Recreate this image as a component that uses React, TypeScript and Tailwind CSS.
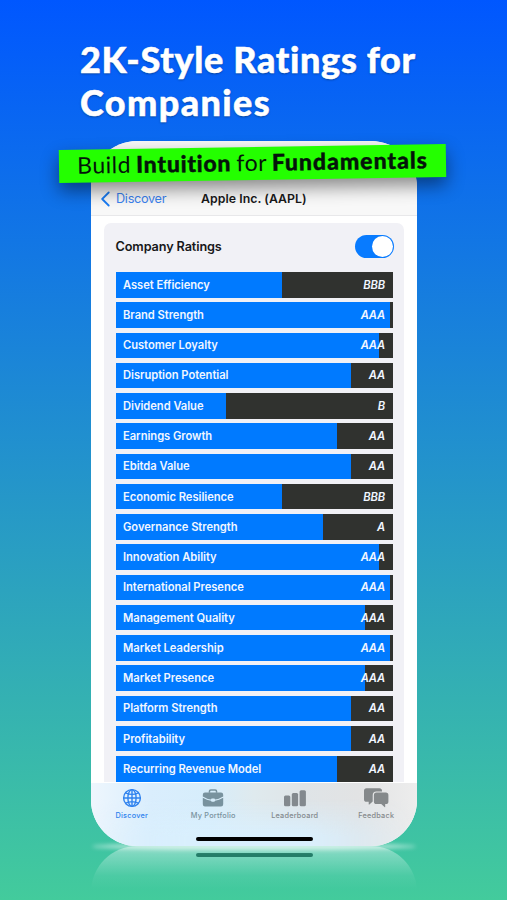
const ratings = [
  { name: 'Asset Efficiency', score: 60, grade: 'BBB' },
  { name: 'Brand Strength', score: 99, grade: 'AAA' },
  { name: 'Customer Loyalty', score: 95, grade: 'AAA' },
  { name: 'Disruption Potential', score: 85, grade: 'AA' },
  { name: 'Dividend Value', score: 40, grade: 'B' },
  { name: 'Earnings Growth', score: 80, grade: 'AA' },
  { name: 'Ebitda Value', score: 85, grade: 'AA' },
  { name: 'Economic Resilience', score: 60, grade: 'BBB' },
  { name: 'Governance Strength', score: 75, grade: 'A' },
  { name: 'Innovation Ability', score: 95, grade: 'AAA' },
  { name: 'International Presence', score: 99, grade: 'AAA' },
  { name: 'Management Quality', score: 90, grade: 'AAA' },
  { name: 'Market Leadership', score: 99, grade: 'AAA' },
  { name: 'Market Presence', score: 90, grade: 'AAA' },
  { name: 'Platform Strength', score: 85, grade: 'AA' },
  { name: 'Profitability', score: 85, grade: 'AA' },
  { name: 'Recurring Revenue Model', score: 80, grade: 'AA' },
];

function Globe() {
  return (
    <svg width="20" height="20" viewBox="0 0 20 20" fill="none" stroke="currentColor" strokeWidth="1.4">
      <circle cx="10" cy="10" r="8.4" />
      <ellipse cx="10" cy="10" rx="4.1" ry="8.4" />
      <path d="M10 1.6v16.8M1.6 10h16.8M3.6 4.8Q10 8 16.4 4.8M3.6 15.2Q10 12 16.4 15.2" />
    </svg>
  );
}

function Briefcase() {
  return (
    <svg width="22" height="20" viewBox="0 0 22 20" fill="currentColor">
      <path d="M6.7 4.8V3.3Q6.7 1.2 8.8 1.2h4.4q2.1 0 2.1 2.1v1.5h-1.5V3.5q0-.8-.8-.8H9q-.8 0-.8.8v1.3z" />
      <path d="M3 4.5h16q2.2 0 2.2 2.2v1.7Q17 11 13 11.5q0-1-1-1h-2q-1 0-1 1Q5 11 .8 8.4V6.7Q.8 4.5 3 4.5z" />
      <path d="M.8 9.8Q5 12.3 9 12.7q.2 1 1 1h2q.8 0 1-1 4-.4 8.2-2.9v6.4q0 2.2-2.2 2.2H3Q.8 18.4.8 16.2z" />
    </svg>
  );
}

function Bars() {
  return (
    <svg width="24" height="20" viewBox="0 0 24 20" fill="currentColor">
      <rect x="1" y="7.5" width="6.3" height="10.8" rx="1.5" />
      <rect x="8.8" y="5" width="6.3" height="13.3" rx="1.5" />
      <rect x="16.6" y="2.2" width="6.3" height="16.1" rx="1.5" />
    </svg>
  );
}

function Chats() {
  return (
    <svg width="26" height="22" viewBox="0 0 26 22" fill="currentColor">
      <path d="M3.6 1.2h12.8q2.6 0 2.6 2.6v.7h-5.6q-3.7 0-3.7 3.7v6.2L6.4 17.4q-.7.5-.7-.4v-2.2H3.6Q1 14.8 1 12.2V3.8q0-2.6 2.6-2.6z" />
      <path d="M13.5 5.6h9.3q2.6 0 2.6 2.6v6.2q0 2.6-2.6 2.6h-.6v2.7q0 .9-.7.3L18.2 17h-4.7q-2.6 0-2.6-2.6V8.2q0-2.6 2.6-2.6z" />
    </svg>
  );
}

const tabs = [
  { label: 'Discover', icon: <Globe />, color: 'text-[#2f82ee]' },
  { label: 'My Portfolio', icon: <Briefcase />, color: 'text-[#78929e]' },
  { label: 'Leaderboard', icon: <Bars />, color: 'text-[#83898e]' },
  { label: 'Feedback', icon: <Chats />, color: 'text-[#85898b]' },
];

function RatingRow({ name, score, grade }: { name: string; score: number; grade: string }) {
  return (
    <div className="relative flex h-[25.5px] shrink-0 items-center justify-between bg-[#30322f] pt-px pr-[7.5px] pl-[7.5px] text-[11.2px] leading-none font-semibold text-[#f0f6ff]">
      <div className="absolute inset-y-0 left-0 bg-[#007aff]" style={{ width: `${score}%` }} />
      <span className="relative tracking-[-0.04px]">{name}</span>
      <span className="relative tracking-[-0.15px] italic">{grade}</span>
    </div>
  );
}

export default function App() {
  return (
    <main className="relative flex h-[900px] w-[507px] flex-col overflow-hidden bg-[linear-gradient(180deg,#0057ff_0%,#43cb9c_100%)] font-['Inter',sans-serif]">
      <h1 className="flex h-[141px] shrink-0 flex-col pt-[38px] pl-[80px] font-['Lato',sans-serif] text-[36px] leading-[43px] font-black whitespace-nowrap text-white [-webkit-text-stroke:0.5px_white] [text-shadow:0_1px_2px_rgba(0,30,60,0.5)]">
        <span className="tracking-[0.66px]">2K-Style Ratings for</span>
        <span className="tracking-[1.4px]">Companies</span>
      </h1>

      <div className="absolute top-[843px] left-[92px] h-[7px] w-[324px] rounded-[50%] bg-white/60 blur-[2px]" />

      <section className="relative ml-[91px] flex h-[705px] w-[326px] shrink-0 flex-col overflow-hidden rounded-[46px] bg-white">
        <header className="flex h-[75px] shrink-0 items-end border-b border-[#e8e8ea] bg-[#f8f8f8] pb-[8px] pl-[10px]">
          <div className="flex w-[100px] items-center gap-[5px] text-[#3b82f0]">
            <svg width="10" height="16" viewBox="0 0 10 16" fill="none" stroke="#197cf5" strokeWidth="1.8" strokeLinecap="round" strokeLinejoin="round">
              <path d="M7.7 1.5L1.2 8l6.5 6.5" />
            </svg>
            <span className="text-[12.7px] leading-[16px] tracking-[-0.3px]">Discover</span>
          </div>
          <span className="text-[12.3px] leading-[16px] font-semibold tracking-[0.05px] text-[#18181a]">Apple Inc. (AAPL)</span>
        </header>
        <div className="mx-[13px] mt-[7px] flex flex-col rounded-t-[7px] bg-[#f1f1f6] pr-[11.5px] pl-[11.5px]">
          <div className="flex h-[49px] shrink-0 items-center justify-between pb-[2px]">
            <span className="text-[12.7px] font-semibold tracking-[-0.12px] text-[#18181a]">Company Ratings</span>
            <div className="-mr-[1.5px] flex h-[23.5px] w-[39px] items-center justify-end rounded-full bg-[#087bff] p-[1.3px]">
              <div className="size-[21px] rounded-full bg-white" />
            </div>
          </div>
          <div className="flex flex-col gap-[4.78px]">
            {ratings.map((r) => (
              <RatingRow key={r.name} {...r} />
            ))}
          </div>
        </div>
        <nav className="absolute inset-x-0 bottom-0 h-[63px] bg-[linear-gradient(90deg,#eef6fd_0%,#daeefd_18%,#d6edfb_36%,#dfeaee_50%,#dfe4e7_65%,#e2e3e4_82%,#ededed_100%)]">
          <div className="absolute inset-0 bg-[linear-gradient(0deg,#d9effd_0%,#d9effd_15%,transparent_75%)] [mask-image:linear-gradient(90deg,transparent,black_30%,black_65%,transparent)]" />
          <div className="relative flex">
            {tabs.map((t) => (
              <div key={t.label} className={`flex w-[81.5px] flex-col items-center pt-[5px] ${t.color}`}>
                <div className="flex h-[20px] items-center justify-center">{t.icon}</div>
                <span className="mt-[3px] text-[7.3px] leading-[10px] font-medium tracking-[0.22px] whitespace-nowrap">{t.label}</span>
              </div>
            ))}
          </div>
          <div className="absolute bottom-[5px] left-[104.5px] h-[4px] w-[117px] rounded-full bg-black" />
        </nav>
      </section>

      <div className="ml-[91px] flex h-[54px] w-[326px] shrink-0 justify-center rounded-t-[46px] bg-[linear-gradient(180deg,rgba(255,255,255,0.42)_0%,rgba(255,255,255,0.06)_55%,rgba(255,255,255,0)_80%)] pt-[7px]">
        <div className="h-[4px] w-[117px] rounded-full bg-[#247d68]" />
      </div>

      <div className="absolute top-[147px] left-[59px] flex h-[33px] w-[387px] origin-center rotate-[-0.9deg] items-center justify-center bg-[#24ff00] pb-[2px] font-['Lato',sans-serif] text-[23px] text-[#04140a] shadow-[0_8px_18px_rgba(0,0,0,0.45)]">
        <span className="tracking-[0.5px] [word-spacing:-1.2px] whitespace-nowrap">
          Build <b className="font-black tracking-[0.75px] [-webkit-text-stroke:0.4px_#04140a]">Intuition</b> for{' '}
          <b className="font-black tracking-[0.98px] [-webkit-text-stroke:0.4px_#04140a]">Fundamentals</b>
        </span>
      </div>
    </main>
  );
}
